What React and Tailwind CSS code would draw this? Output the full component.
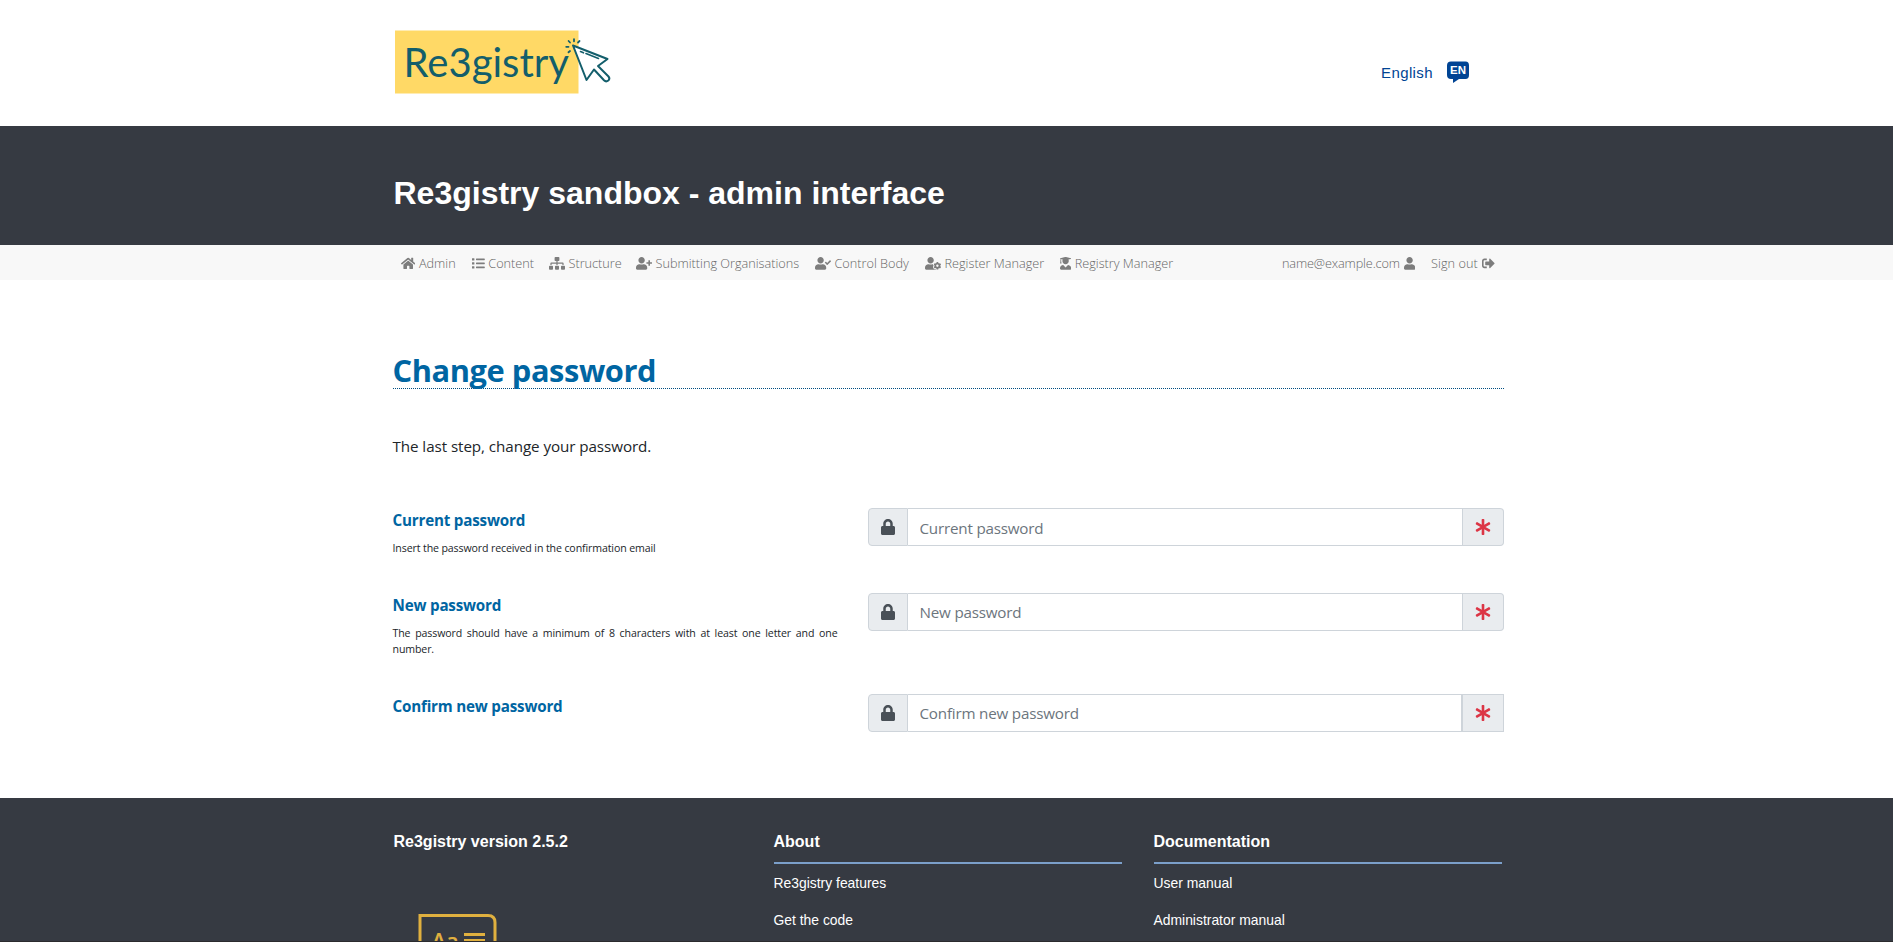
import React from "react";
import {
  FaHome,
  FaList,
  FaSitemap,
  FaUserPlus,
  FaUserCheck,
  FaUserCog,
  FaUserGraduate,
  FaUser,
  FaSignOutAlt,
  FaLock,
  FaAsterisk,
} from "react-icons/fa";

const navItems = [
  { label: "Admin", Icon: FaHome, item: "w-[71px]", icon: "w-[14.4px]" },
  { label: "Content", Icon: FaList, item: "w-[77px]", icon: "w-[12.8px]" },
  { label: "Structure", Icon: FaSitemap, item: "w-[87px]", icon: "w-[16px]" },
  { label: "Submitting Organisations", Icon: FaUserPlus, item: "w-[179px]", icon: "w-[16px]" },
  { label: "Control Body", Icon: FaUserCheck, item: "w-[110px]", icon: "w-[16px]" },
  { label: "Register Manager", Icon: FaUserCog, item: "w-[135px]", icon: "w-[16px]" },
  { label: "Registry Manager", Icon: FaUserGraduate, item: "w-[120px]", icon: "w-[11.2px]" },
];

const fields = [
  {
    label: "Current password",
    help: "Insert the password received in the confirmation email",
    row: "h-[85px]",
    input: "pt-[2px]",
    addon: "w-[41px] rounded-r border-l-0",
  },
  {
    label: "New password",
    help: "The password should have a minimum of 8 characters with at least one letter and one number.",
    row: "h-[101px]",
    input: "pt-0",
    addon: "w-[41px] rounded-r border-l-0",
  },
  {
    label: "Confirm new password",
    row: "h-[104px]",
    input: "pt-0",
    addon: "w-[42px] border-l",
  },
];

function Logo() {
  return (
    <svg className="block h-[70px] w-[220px]" viewBox="0 0 220 70">
      <rect x="2" y="5.5" width="183.5" height="63" fill="#ffd966" />
      <text
        x="10.5"
        y="52"
        fontFamily="Lato, sans-serif"
        fontSize="41"
        fill="#135e6b"
        textLength="165.5"
        lengthAdjust="spacingAndGlyphs"
      >
        Re3gistry
      </text>
      <g fill="none" stroke="#135e6b" strokeWidth="2" strokeLinejoin="round" strokeLinecap="round">
        <path
          fill="#fff"
          d="M180 20.5 L214.5 34 L205 41 L215.500 51.500 Q217.300 53.700 215.300 55.500 Q213 57.300 211 55.300 L201 44.500 L193.500 55 Z"
        />
        <path strokeWidth="1.600" d="M187.500 26.500 L190.500 27.800 M193 28.500 L205.500 33.500" />
        <path strokeWidth="1.800" d="M181 16.300 V14.200 M185 17.500 L186.500 16 M177 17.500 L175.600 16 M175.500 21.800 H173.200 M177 26 L175.500 27.300" />
      </g>
    </svg>
  );
}

function LanguageBadge() {
  return (
    <svg className="block h-[23px] w-[23px]" viewBox="0 0 23 23">
      <path
        d="M4 .5 H18.500 Q22 .5 22 4.500 V14 Q22 18 18.500 18 H12 L6 22 V18 H4 Q0 18 0 14 V4.500 Q0 .5 4 .5 Z"
        fill="#004494"
      />
      <text
        x="11"
        y="13"
        textAnchor="middle"
        fontFamily="Liberation Sans, sans-serif"
        fontWeight="700"
        fontSize="11.500"
        fill="#fff"
      >
        EN
      </text>
    </svg>
  );
}

function Field({ label, help, row, input, addon }) {
  return (
    <div className={"flex " + row}>
      <div className="w-[445px] shrink-0">
        <label className="block text-[15.2px] leading-6 font-bold tracking-[-0.2px] text-[#0065a2]">
          {label}
        </label>
        {help && (
          <p className="mt-2 text-justify text-[10.6px] leading-4 tracking-[-0.12px] text-[#212529]">
            {help}
          </p>
        )}
      </div>
      <div className="ml-[30.5px] flex h-[38px] w-[636px] shrink-0">
        <span className="flex w-[40px] items-center justify-center rounded-l border border-[#ced4da] bg-[#e9ecef] text-[#495057]">
          <FaLock className="h-4 w-[14px]" />
        </span>
        <input
          type="password"
          placeholder={label}
          className={
            "min-w-0 flex-1 border border-l-0 border-[#ced4da] bg-white pr-3 pl-[11.5px] text-[15.2px] tracking-[-0.2px] outline-none placeholder:text-[#6c757d] " +
            input
          }
        />
        <span
          className={"flex items-center justify-center border border-[#ced4da] bg-[#e9ecef] text-[#dc3545] " + addon}
        >
          <FaAsterisk className="h-4 w-4" />
        </span>
      </div>
    </div>
  );
}

function FooterColumn({ title, links }) {
  return (
    <div className="w-[348px]">
      <h2 className="box-content h-[30px] border-b-2 border-[#7b9fca] text-base leading-5 font-bold">
        {title}
      </h2>
      <div className="mt-[9px] flex flex-col gap-[17px] text-[13.9px] leading-5">
        {links.map((link) => (
          <a key={link}>{link}</a>
        ))}
      </div>
    </div>
  );
}

export default function App() {
  return (
    <div className="h-[942px] overflow-hidden bg-white font-['Open_Sans',sans-serif]">
      <header className="flex h-[126px] pl-[393px]">
        <div className="pt-[25px]">
          <Logo />
        </div>
        <div className="ml-[768px] flex pt-[61px]">
          <span className="w-[66px] font-['Liberation_Sans',sans-serif] text-[15px] leading-[23px] tracking-[0.4px] text-[#004494]">
            English
          </span>
          <LanguageBadge />
        </div>
      </header>

      <div className="h-[119px] bg-[#363a42] pt-[47px] pl-[393.5px]">
        <h1 className="font-['Liberation_Sans',sans-serif] text-[32px] leading-10 font-bold text-white">
          Re3gistry sandbox - admin interface
        </h1>
      </div>

      <nav className="flex h-[35px] items-center bg-[#f8f8f8] pt-[2px] pl-[401px] text-[12.7px] font-light whitespace-nowrap text-[#666]">
        {navItems.map(({ label, Icon, item, icon }) => (
          <a key={label} className={"flex items-center gap-[3.5px] " + item}>
            <Icon className={"h-[12.8px] shrink-0 text-[#7d7d7d] " + icon} />
            <span>{label}</span>
          </a>
        ))}
        <a className="ml-[102px] flex w-[149px] items-center gap-[4px]">
          <span className="tracking-[-0.13px]">name@example.com</span>
          <FaUser className="h-[12.8px] w-[11.2px] text-[#7d7d7d]" />
        </a>
        <a className="flex items-center gap-[4px]">
          <span className="tracking-[0.05px]">Sign out</span>
          <FaSignOutAlt className="h-[12.8px] w-[12.8px] text-[#7d7d7d]" />
        </a>
      </nav>

      <main className="h-[518px] pt-[69px] pl-[392.5px]">
        <div className="w-[1111px]">
          <h2 className="h-[40px] border-b border-dotted border-[#004d80] text-[30.8px] leading-[43px] font-bold tracking-[-0.42px] text-[#0065a2]">
            Change password
          </h2>
          <p className="mt-[45px] mb-[50px] text-[15.2px] leading-6 tracking-[-0.07px] text-[#212529]">
            The last step, change your password.
          </p>
          {fields.map((field) => (
            <Field key={field.label} {...field} />
          ))}
        </div>
      </main>

      <footer className="flex h-[144px] border-b border-[#2b2b2e] bg-[#363a42] pt-[34px] pl-[393.5px] font-['Liberation_Sans',sans-serif] text-white">
        <div className="w-[380px]">
          <h2 className="text-base leading-5 font-bold">Re3gistry version 2.5.2</h2>
          <svg className="mt-[60px] ml-[24px] block h-[29px] w-[80px]" viewBox="0 0 80 29">
            <path d="M2 32 V3.500 H70 Q77 3.500 77 10.500 V32" fill="none" stroke="#e0b03f" strokeWidth="3" />
            <text x="13.5" y="36.500" fontFamily="Open Sans, sans-serif" fontWeight="600" fontSize="22" fill="#e0b03f">
              Aa
            </text>
            <path d="M46 22.500 H67 M46 28.500 H67" stroke="#e0b03f" strokeWidth="2.800" />
          </svg>
        </div>
        <FooterColumn title="About" links={["Re3gistry features", "Get the code"]} />
        <div className="ml-[32px]">
          <FooterColumn title="Documentation" links={["User manual", "Administrator manual"]} />
        </div>
      </footer>
    </div>
  );
}
